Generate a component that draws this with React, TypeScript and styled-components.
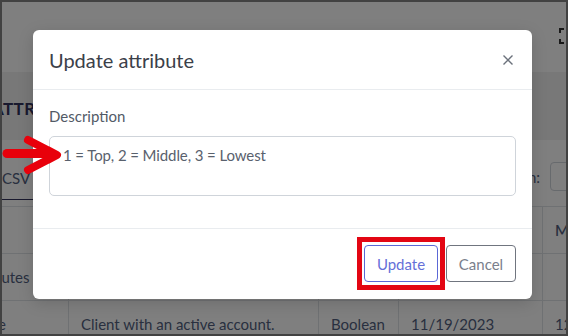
import styled, { createGlobalStyle } from "styled-components";

const GlobalStyle = createGlobalStyle`
  html, body {
    margin: 0;
    padding: 0;
    background: #424242;
  }
  * {
    box-sizing: border-box;
  }
`;

const FONT = `Lato, "Liberation Sans", sans-serif`;

const Frame = styled.div`
  position: relative;
  width: 568px;
  height: 336px;
  border: 2px solid #424242;
  background: #ffffff;
  overflow: hidden;
  font-family: ${FONT};
  color: #525f7f;
`;

const TopBar = styled.div`
  height: 70px;
  display: flex;
  align-items: center;
  justify-content: flex-end;
`;

const CornerIcon = styled.svg`
  margin-right: -9px;
  margin-top: -2px;
`;

const Band = styled.div`
  height: 68px;
  background: #f0f0f0;
  display: flex;
  align-items: center;
  padding-top: 4px;
`;

const PageTitle = styled.h2`
  margin: 0 0 0 -10px;
  font-size: 17px;
  font-weight: 700;
  letter-spacing: 0.4px;
  color: #32325d;
`;

const Toolbar = styled.div`
  height: 66px;
  display: flex;
  justify-content: space-between;
  align-items: flex-start;
  padding-top: 23px;
`;

const ExportTab = styled.div`
  height: 37px;
  padding: 6px 6px 0 0;
  font-size: 15px;
  border-bottom: 1px solid #32325d;
  color: #525f7f;
`;

const SearchGroup = styled.label`
  display: flex;
  align-items: center;
  gap: 10px;
  font-size: 15px;
  color: #525f7f;
  margin-right: -80px;
`;

const SearchInput = styled.div`
  width: 96px;
  height: 29px;
  border: 1px solid #ced4da;
  border-radius: 4px;
  margin-top: -1px;
`;

const Table = styled.div`
  margin-left: -50px;
  display: grid;
  grid-template-columns: 117px 250px 80px 144px 120px;
  border-top: 1px solid #dee2e6;
  font-size: 15px;
  color: #525f7f;
`;

const Cell = styled.div<{ $head?: boolean }>`
  height: 47px;
  padding: 0 12px;
  display: flex;
  align-items: center;
  border-right: 1px solid #dee2e6;
  border-bottom: 1px solid #dee2e6;
  white-space: nowrap;
  font-weight: ${(p) => (p.$head ? 600 : 400)};
`;

const Overlay = styled.div`
  position: absolute;
  inset: 0;
  background: rgba(0, 0, 0, 0.5);
  display: flex;
  align-items: flex-start;
  justify-content: flex-start;
  padding: 28px 0 0 31px;
`;

const Modal = styled.div`
  width: 499px;
  background: #ffffff;
  border-radius: 6px;
  box-shadow: 0 4px 16px rgba(0, 0, 0, 0.15);
`;

const ModalHeader = styled.div`
  height: 60px;
  display: flex;
  align-items: center;
  justify-content: space-between;
  padding: 0 16px;
  border-bottom: 1px solid #e9ecef;
`;

const ModalTitle = styled.h5`
  margin: 0;
  font-size: 20px;
  font-weight: 400;
  color: #3b4049;
`;

const CloseButton = styled.button`
  width: 10px;
  height: 10px;
  padding: 0;
  margin-right: 3px;
  border: none;
  background: none;
  display: flex;
  cursor: pointer;
`;

const ModalBody = styled.div`
  padding: 16px 16px 32px;
`;

const FieldLabel = styled.label`
  display: block;
  font-size: 15px;
  line-height: 21px;
  color: #525a66;
  margin-bottom: 9px;
`;

const TextArea = styled.textarea`
  display: block;
  width: 100%;
  height: 60px;
  resize: none;
  border: 1px solid #cfd4da;
  border-radius: 5px;
  padding: 7px 13px;
  font-family: ${FONT};
  font-size: 15px;
  letter-spacing: -0.1px;
  line-height: 22px;
  color: #59616d;
  outline: none;
`;

const ModalFooter = styled.div`
  display: flex;
  justify-content: flex-end;
  gap: 8px;
  padding: 16px 16px 17px;
  border-top: 1px solid #e9ecef;
`;

const Highlight = styled.span`
  position: relative;
  display: flex;
  &::after {
    content: "";
    position: absolute;
    inset: -8px -7px;
    border: 5px solid #e30613;
    pointer-events: none;
  }
`;

const OutlineButton = styled.button<{ $tone: "primary" | "secondary" }>`
  width: ${(p) => (p.$tone === "primary" ? "74px" : "70px")};
  height: 37px;
  padding: 0;
  border-radius: 4px;
  background: #ffffff;
  font-family: ${FONT};
  font-size: 15px;
  border: 1px solid ${(p) => (p.$tone === "primary" ? "#5b68d6" : "#70757f")};
  color: ${(p) => (p.$tone === "primary" ? "#6570d8" : "#7a808c")};
  cursor: pointer;
`;

const Arrow = styled.svg`
  position: absolute;
  left: 0;
  top: 132px;
`;

export default function App() {
  return (
    <>
      <GlobalStyle />
      <Frame>
        <TopBar>
          <CornerIcon width="16" height="16" viewBox="0 0 16 16" fill="none" stroke="#333" strokeWidth="2">
            <path d="M5 1H1v4M11 1h4v4M1 11v4h4M15 11v4h-4" />
          </CornerIcon>
        </TopBar>
        <Band>
          <PageTitle>ATTRIBUTES</PageTitle>
        </Band>
        <Toolbar>
          <ExportTab>CSV</ExportTab>
          <SearchGroup>
            Search:
            <SearchInput />
          </SearchGroup>
        </Toolbar>
        <Table>
          <Cell $head />
          <Cell $head>Description</Cell>
          <Cell $head>Type</Cell>
          <Cell $head>Created</Cell>
          <Cell $head>Modified</Cell>
          <Cell>Attributes</Cell>
          <Cell />
          <Cell />
          <Cell />
          <Cell />
          <Cell>Active</Cell>
          <Cell>Client with an active account.</Cell>
          <Cell>Boolean</Cell>
          <Cell>11/19/2023</Cell>
          <Cell>12/01/2023</Cell>
        </Table>

        <Overlay>
          <Modal>
            <ModalHeader>
              <ModalTitle>Update attribute</ModalTitle>
              <CloseButton aria-label="Close">
                <svg width="10" height="10" viewBox="0 0 10 10" stroke="#6b717b" strokeWidth="1.4">
                  <path d="M0.5 0.5l9 9M9.5 0.5l-9 9" />
                </svg>
              </CloseButton>
            </ModalHeader>
            <ModalBody>
              <FieldLabel>Description</FieldLabel>
              <TextArea defaultValue="1 = Top, 2 = Middle, 3 = Lowest" />
            </ModalBody>
            <ModalFooter>
              <Highlight>
                <OutlineButton $tone="primary">Update</OutlineButton>
              </Highlight>
              <OutlineButton $tone="secondary">Cancel</OutlineButton>
            </ModalFooter>
          </Modal>
        </Overlay>

        <Arrow width="64" height="42" viewBox="0 0 64 42" fill="none" stroke="#e8000b" strokeLinecap="round" strokeLinejoin="round">
          <path d="M5 19.5H48" strokeWidth="9" />
          <path d="M26 6L55 21L26 36" strokeWidth="8" />
        </Arrow>
      </Frame>
    </>
  );
}
